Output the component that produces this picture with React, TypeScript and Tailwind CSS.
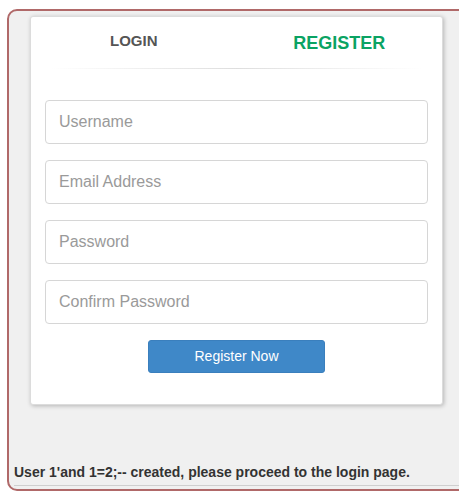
const fields = ["Username", "Email Address", "Password", "Confirm Password"];

const App = () => {
  return (
    <div className="w-[459px] h-[492px] overflow-hidden bg-white font-['Liberation_Sans',Arial,sans-serif]">
      <div className="ml-[7px] mt-[9px] w-[470px] h-[482px] border-2 border-[#b06969] rounded-[10px] bg-[#f0f0f0] flex flex-col">
        <div className="ml-[21px] mt-[5px] w-[413px] h-[389px] bg-white rounded-[3px] border border-[#dcdcdc] shadow-[1px_1px_4px_rgba(0,0,0,0.25)] flex flex-col">
          <div className="flex h-[51px] items-center">
            <div className="w-1/2 text-center text-[15px] font-bold text-[#555] pb-[3px]">
              LOGIN
            </div>
            <div className="w-1/2 text-center text-[18px] font-bold text-[#0aa363] pt-[2px]">
              REGISTER
            </div>
          </div>
          <div className="mx-[20px] h-px bg-gradient-to-r from-transparent via-[#dedede] to-transparent" />
          <form className="flex flex-col gap-[16px] px-[14px] pt-[31px]">
            {fields.map((f) => (
              <input
                key={f}
                placeholder={f}
                type="text"
                className="h-[44px] w-[383px] rounded-[4px] border border-[#d6d6d6] pl-[13px] pb-[1px] text-[16px] text-[#555] placeholder:text-[#9a9a9a] outline-none"
              />
            ))}
            <button
              type="button"
              className="self-center w-[177px] h-[33px] rounded-[3px] bg-[#3f88c8] border border-[#3a7fbd] text-white text-[14px]"
            >
              Register Now
            </button>
          </form>
        </div>
        <div className="flex-1" />
        <p className="px-[5px] text-[14px] font-bold text-[#333] leading-[20px]">
          User 1'and 1=2;-- created, please proceed to the login page.
        </p>
        <hr className="ml-[5px] mt-[3px] mb-[3px] border-t border-[#cfcfcf]" />
      </div>
    </div>
  );
};

export default App;
